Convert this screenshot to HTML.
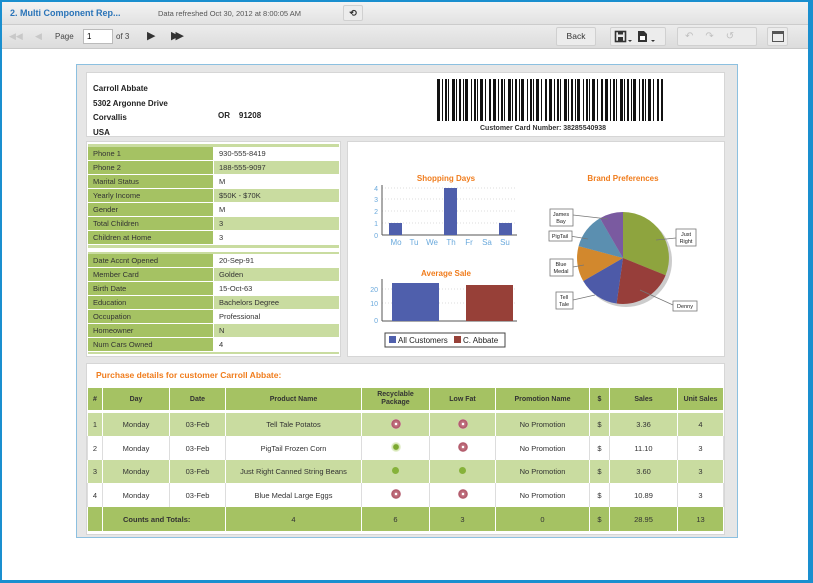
<!DOCTYPE html>
<html><head><meta charset="utf-8"><style>
*{margin:0;padding:0;box-sizing:border-box}
body{width:813px;height:583px;overflow:hidden;font-family:"Liberation Sans",sans-serif;background:#fff;position:relative}
.frame{position:absolute;left:0;top:0;width:813px;height:583px;border:2px solid #1a8fcf;border-right-width:5px;border-bottom-width:3px}
.abs{position:absolute}
.hdr{left:2px;top:2px;width:806px;height:23px;background:linear-gradient(#f3f3f3,#e2e2e2);border-bottom:1px solid #ccc}
.tb{left:2px;top:25px;width:806px;height:24px;background:linear-gradient(#ececec,#dcdcdc);border-bottom:1px solid #c8c8c8}
.btn{position:absolute;border:1px solid #d0d0d0;background:#ececec;border-radius:2px}
.rep{left:76px;top:64px;width:662px;height:474px;background:#e6e6e6;border:1px solid #8cc0e0}
.pan{position:absolute;background:#fff;border:1px solid #d6d6d6}
.tbl{position:absolute;font-size:7.5px;color:#333}
.tbl div{position:absolute;height:13px;line-height:13px;padding-left:5px}
.g{background:#a5c263}.lg{background:#c9dca0}.w{background:#fff}
table.pt{position:absolute;left:87px;top:388px;width:637px;border-collapse:collapse;font-size:7.5px;color:#333;text-align:center}
table.pt td{border-left:1px solid #fff;border-right:1px solid #fff;padding:0}
.dot{display:inline-block;width:10px;height:10px;border-radius:50%;background:radial-gradient(#fff 15%,#c47b88 20%,#b05566 60%,#e0c0c8 70%)}
.gd{display:inline-block;width:10px;height:10px;border-radius:50%;background:radial-gradient(#7ca82f 35%,#cfe3a8 45%,#eef5e0 70%)}
.gs{display:inline-block;width:7px;height:7px;border-radius:50%;background:#86b23a}
</style></head><body>
<div class="abs hdr"></div>
<div class="abs" style="left:10px;top:8px;font-size:9px;font-weight:bold;color:#2a74b8">2. Multi Component Rep...</div>
<div class="abs" style="left:158px;top:9px;font-size:7.5px;color:#555">Data refreshed Oct 30, 2012 at 8:00:05 AM</div>
<div class="btn" style="left:343px;top:5px;width:20px;height:16px;font-size:9px;text-align:center;line-height:14px;color:#333;font-weight:bold">⟲</div>
<div class="abs tb"></div>
<div class="abs" style="left:9px;top:31px;font-size:9px;color:#c8c8c8">◀◀</div>
<div class="abs" style="left:35px;top:31px;font-size:9px;color:#c8c8c8">◀</div>
<div class="abs" style="left:55px;top:32px;font-size:8px;color:#444">Page</div>
<div class="abs" style="left:83px;top:29px;width:30px;height:15px;background:#fff;border:1px solid #bbb;font-size:8px;padding:2px 3px">1</div>
<div class="abs" style="left:116px;top:32px;font-size:8px;color:#444">of 3</div>
<div class="abs" style="left:147px;top:29px;font-size:11px;color:#333">▶</div>
<div class="abs" style="left:171px;top:29px;font-size:11px;color:#333;letter-spacing:-4px">▶▶</div>
<div class="btn" style="left:556px;top:27px;width:40px;height:19px;font-size:8.5px;text-align:center;line-height:17px;color:#333">Back</div>
<div class="btn" style="left:610px;top:27px;width:56px;height:19px"></div>
<svg class="abs" style="left:614px;top:30px" width="50" height="14"><rect x="1.5" y="1.5" width="10" height="10" fill="none" stroke="#333" stroke-width="1.6"/><rect x="4" y="1.5" width="5" height="3" fill="#333"/><rect x="4" y="7" width="5" height="4" fill="#333"/><path d="M14 10l2 2l2-2z" fill="#333"/><path d="M24 1h6l3 3v8h-9z" fill="#333"/><rect x="26" y="6" width="5" height="4" fill="#fff"/><path d="M37 10l2 2l2-2z" fill="#333"/></svg>
<div class="btn" style="left:677px;top:27px;width:80px;height:19px;font-size:10px;line-height:17px;color:#c0c0c0;padding-left:7px;letter-spacing:12px">↶↷↺</div>
<div class="btn" style="left:767px;top:27px;width:21px;height:19px"><div class="abs" style="left:4px;top:3px;width:12px;height:11px;border:1px solid #555;border-top-width:3px"></div></div>

<div class="abs rep"></div>
<div class="pan" style="left:86px;top:72px;width:639px;height:65px"></div>
<div class="abs" style="left:93px;top:82px;font-size:8px;font-weight:bold;color:#222;line-height:14.5px">Carroll Abbate<br>5302 Argonne Drive<br>Corvallis<br>USA</div>
<div class="abs" style="left:218px;top:111px;font-size:8px;font-weight:bold;color:#222">OR&nbsp;&nbsp;&nbsp; 91208</div>
<svg class="abs" style="left:437px;top:79px" width="226" height="42"><defs><g id="bc" fill="#111"><rect x="0" width="3" height="42"/><rect x="5" width="1" height="42"/><rect x="8" width="2" height="42"/><rect x="11" width="1" height="42"/><rect x="15" width="3" height="42"/><rect x="19" width="1" height="42"/><rect x="22" width="2" height="42"/><rect x="26" width="1" height="42"/><rect x="28" width="3" height="42"/><rect x="34" width="1" height="42"/><rect x="37" width="2" height="42"/><rect x="40" width="1" height="42"/><rect x="43" width="3" height="42"/><rect x="48" width="1" height="42"/><rect x="52" width="2" height="42"/></g></defs><use href="#bc"/><use href="#bc" x="56"/><use href="#bc" x="112"/><use href="#bc" x="168"/><rect x="224" width="2" height="42" fill="#111"/></svg>
<div class="abs" style="left:480px;top:125px;font-size:7px;font-weight:bold;color:#333">Customer Card Number: 38285540938</div>

<div class="pan" style="left:86px;top:141px;width:255px;height:216px"></div>
<div class="tbl" style="left:88px;top:144px">
<div class="lg" style="left:0;top:0;width:251px;height:3px"></div>
<div class="g" style="top:3px;left:0;width:125px">Phone 1</div><div class="w" style="top:3px;left:126px;width:125px">930-555-8419</div>
<div class="g" style="top:17px;left:0;width:125px">Phone 2</div><div class="lg" style="top:17px;left:126px;width:125px">188-555-9097</div>
<div class="g" style="top:31px;left:0;width:125px">Marital Status</div><div class="w" style="top:31px;left:126px;width:125px">M</div>
<div class="g" style="top:45px;left:0;width:125px">Yearly Income</div><div class="lg" style="top:45px;left:126px;width:125px">$50K - $70K</div>
<div class="g" style="top:59px;left:0;width:125px">Gender</div><div class="w" style="top:59px;left:126px;width:125px">M</div>
<div class="g" style="top:73px;left:0;width:125px">Total Children</div><div class="lg" style="top:73px;left:126px;width:125px">3</div>
<div class="g" style="top:87px;left:0;width:125px">Children at Home</div><div class="w" style="top:87px;left:126px;width:125px">3</div>
<div class="lg" style="left:0;top:101px;width:251px;height:3px"></div>
<div class="lg" style="left:0;top:108px;width:251px;height:2px"></div>
<div class="g" style="top:110px;left:0;width:125px">Date Accnt Opened</div><div class="w" style="top:110px;left:126px;width:125px">20-Sep-91</div>
<div class="g" style="top:124px;left:0;width:125px">Member Card</div><div class="lg" style="top:124px;left:126px;width:125px">Golden</div>
<div class="g" style="top:138px;left:0;width:125px">Birth Date</div><div class="w" style="top:138px;left:126px;width:125px">15-Oct-63</div>
<div class="g" style="top:152px;left:0;width:125px">Education</div><div class="lg" style="top:152px;left:126px;width:125px">Bachelors Degree</div>
<div class="g" style="top:166px;left:0;width:125px">Occupation</div><div class="w" style="top:166px;left:126px;width:125px">Professional</div>
<div class="g" style="top:180px;left:0;width:125px">Homeowner</div><div class="lg" style="top:180px;left:126px;width:125px">N</div>
<div class="g" style="top:194px;left:0;width:125px">Num Cars Owned</div><div class="w" style="top:194px;left:126px;width:125px">4</div>
<div class="lg" style="left:0;top:208px;width:251px;height:2px"></div>
</div>

<div class="pan" style="left:347px;top:141px;width:378px;height:216px"></div>
<svg class="abs" style="left:347px;top:141px" width="378" height="216" font-family="Liberation Sans, sans-serif">
<text x="99" y="40" font-size="8" font-weight="bold" fill="#f07c1c" text-anchor="middle">Shopping Days</text>
<g stroke="#ddd" stroke-dasharray="1,2"><line x1="35" y1="47" x2="168" y2="47"/><line x1="35" y1="58" x2="168" y2="58"/><line x1="35" y1="70" x2="168" y2="70"/><line x1="35" y1="82" x2="168" y2="82"/></g>
<line x1="35" y1="44" x2="35" y2="94" stroke="#555"/><line x1="35" y1="94" x2="170" y2="94" stroke="#555"/>
<g font-size="7" fill="#6aa9dc" text-anchor="end"><text x="31" y="50">4</text><text x="31" y="61">3</text><text x="31" y="73">2</text><text x="31" y="85">1</text><text x="31" y="97">0</text></g>
<g fill="#4f5fac"><rect x="42" y="82" width="13" height="12"/><rect x="97" y="47" width="13" height="47"/><rect x="152" y="82" width="13" height="12"/></g>
<g font-size="8" fill="#6aa9dc" text-anchor="middle"><text x="49" y="104">Mo</text><text x="67" y="104">Tu</text><text x="85" y="104">We</text><text x="104" y="104">Th</text><text x="122" y="104">Fr</text><text x="140" y="104">Sa</text><text x="158" y="104">Su</text></g>
<text x="99" y="135" font-size="8" font-weight="bold" fill="#f07c1c" text-anchor="middle">Average Sale</text>
<g stroke="#ddd" stroke-dasharray="1,2"><line x1="35" y1="148" x2="168" y2="148"/><line x1="35" y1="162" x2="168" y2="162"/></g>
<line x1="35" y1="138" x2="35" y2="180" stroke="#555"/><line x1="35" y1="180" x2="170" y2="180" stroke="#555"/>
<g font-size="7" fill="#6aa9dc" text-anchor="end"><text x="31" y="151">20</text><text x="31" y="165">10</text><text x="31" y="182">0</text></g>
<rect x="45" y="142" width="47" height="38" fill="#4f5fac"/><rect x="119" y="144" width="47" height="36" fill="#974038"/>
<rect x="38" y="192" width="120" height="14" fill="#fff" stroke="#444"/>
<rect x="42" y="195" width="7" height="7" fill="#4f5fac"/><text x="51" y="202" font-size="8" fill="#222">All Customers</text>
<rect x="107" y="195" width="7" height="7" fill="#974038"/><text x="116" y="202" font-size="8" fill="#222">C. Abbate</text>
<text x="276" y="40" font-size="8" font-weight="bold" fill="#f07c1c" text-anchor="middle">Brand Preferences</text>
<g transform="translate(-347,-141)">
<circle cx="626" cy="261" r="46" fill="#999" opacity=".5"/>
<path d="M623 258L623 212A46 46 0 0 1 665.6 275.2Z" fill="#8ea43e"/>
<path d="M623 258L665.6 275.2A46 46 0 0 1 616.6 303.5Z" fill="#973e3a"/>
<path d="M623 258L616.6 303.5A46 46 0 0 1 583.2 281Z" fill="#4d5aa8"/>
<path d="M623 258L583.2 281A46 46 0 0 1 578.6 246.1Z" fill="#d2882d"/>
<path d="M623 258L578.6 246.1A46 46 0 0 1 600 218.2Z" fill="#5b8fb0"/>
<path d="M623 258L600 218.2A46 46 0 0 1 623 212Z" fill="#7a5aa0"/>
<g stroke="#777" fill="none" stroke-width=".7"><path d="M573 215L608 219"/><path d="M570 236L588 239"/><path d="M573 267L584 265"/><path d="M573 300L595 295"/><path d="M676 238L656 240"/><path d="M673 305L640 290"/></g>
<g fill="#fff" stroke="#777" stroke-width=".8"><rect x="550" y="209" width="23" height="17"/><rect x="549" y="231" width="23" height="10"/><rect x="550" y="259" width="23" height="17"/><rect x="556" y="292" width="17" height="17"/><rect x="676" y="229" width="20" height="17"/><rect x="673" y="301" width="24" height="10"/></g>
<g font-size="5.5" fill="#222" text-anchor="middle"><text x="561" y="216">James</text><text x="561" y="223">Bay</text><text x="560" y="238">PigTail</text><text x="561" y="266">Blue</text><text x="561" y="273">Medal</text><text x="564" y="299">Tell</text><text x="564" y="306">Tale</text><text x="686" y="236">Just</text><text x="686" y="243">Right</text><text x="685" y="308">Denny</text></g>
</g>
</svg>

<div class="pan" style="left:86px;top:363px;width:639px;height:172px"></div>
<div class="abs" style="left:96px;top:370px;font-size:8.5px;font-weight:bold;color:#f07c1c">Purchase details for customer Carroll Abbate:</div>
<table class="pt">
<tr style="height:22px;background:#a5c263;font-weight:bold;font-size:7px"><td style="width:15px">#</td><td style="width:67px">Day</td><td style="width:56px">Date</td><td style="width:136px">Product Name</td><td style="width:68px;line-height:8px">Recyclable<br>Package</td><td style="width:66px">Low Fat</td><td style="width:94px">Promotion Name</td><td style="width:20px">$</td><td style="width:68px">Sales</td><td>Unit Sales</td></tr>
<tr style="height:3px;background:#fff"><td colspan="10"></td></tr>
<tr style="height:23px;background:#c9dca0"><td>1</td><td>Monday</td><td>03-Feb</td><td>Tell Tale Potatos</td><td><span class="dot"></span></td><td><span class="dot"></span></td><td>No Promotion</td><td>$</td><td>3.36</td><td>4</td></tr>
<tr style="height:24px;background:#fff"><td style="border-color:#ddd">2</td><td style="border-color:#ddd">Monday</td><td style="border-color:#ddd">03-Feb</td><td style="border-color:#ddd">PigTail Frozen Corn</td><td style="border-color:#ddd"><span class="gd"></span></td><td style="border-color:#ddd"><span class="dot"></span></td><td style="border-color:#ddd">No Promotion</td><td style="border-color:#ddd">$</td><td style="border-color:#ddd">11.10</td><td style="border-color:#ddd">3</td></tr>
<tr style="height:23px;background:#c9dca0"><td>3</td><td>Monday</td><td>03-Feb</td><td>Just Right Canned String Beans</td><td><span class="gs"></span></td><td><span class="gs"></span></td><td>No Promotion</td><td>$</td><td>3.60</td><td>3</td></tr>
<tr style="height:24px;background:#fff"><td style="border-color:#ddd">4</td><td style="border-color:#ddd">Monday</td><td style="border-color:#ddd">03-Feb</td><td style="border-color:#ddd">Blue Medal Large Eggs</td><td style="border-color:#ddd"><span class="dot"></span></td><td style="border-color:#ddd"><span class="dot"></span></td><td style="border-color:#ddd">No Promotion</td><td style="border-color:#ddd">$</td><td style="border-color:#ddd">10.89</td><td style="border-color:#ddd">3</td></tr>
<tr style="height:24px;background:#a5c263"><td></td><td colspan="2" style="font-weight:bold;text-align:left;padding-left:20px">Counts and Totals:</td><td>4</td><td>6</td><td>3</td><td>0</td><td>$</td><td>28.95</td><td>13</td></tr>
</table>
<div class="frame"></div>
</body></html>
